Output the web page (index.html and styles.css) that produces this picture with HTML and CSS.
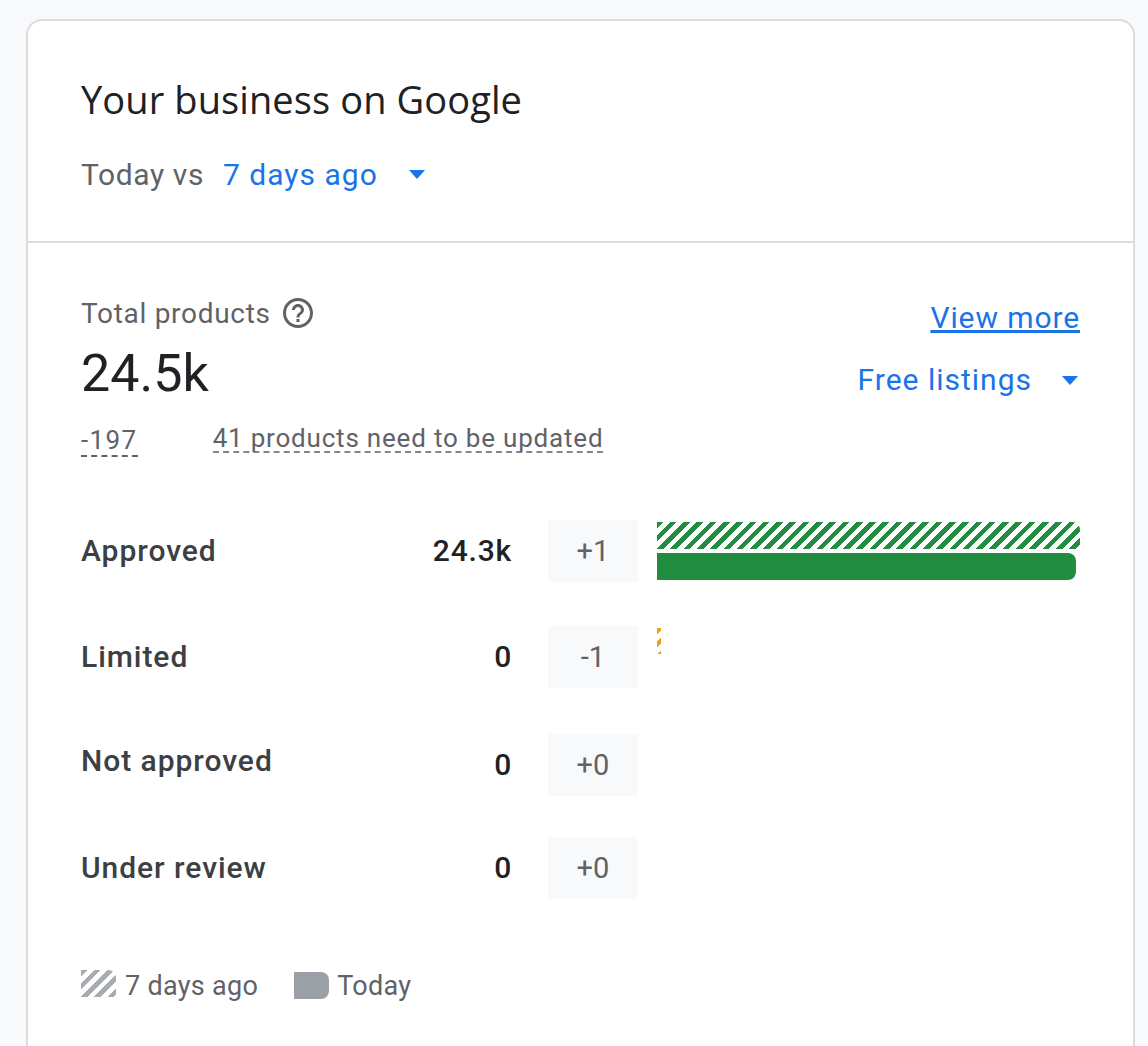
FILE: index.html
```html
<!DOCTYPE html>
<html lang="en">
<head>
<meta charset="utf-8">
<title>Your business on Google</title>
<link rel="stylesheet" href="styles.css">
</head>
<body>
<main class="card">
  <header class="head">
    <h1 class="title">Your business on Google</h1>
    <div class="compare">
      <span class="compare-label">Today vs</span>
      <span class="compare-value">7 days ago</span>
      <span class="caret caret-head"></span>
    </div>
  </header>
  <section class="body">
    <div class="summary">
      <div class="summary-left">
        <div class="total-label">Total products
          <svg class="help" viewBox="0 0 24 24" aria-hidden="true"><path d="M11 18h2v-2h-2v2zm1-16C6.48 2 2 6.48 2 12s4.48 10 10 10 10-4.48 10-10S17.52 2 12 2zm0 18c-4.41 0-8-3.59-8-8s3.59-8 8-8 8 3.59 8 8-3.59 8-8 8zm0-14c-2.21 0-4 1.79-4 4h2c0-1.1.9-2 2-2s2 .9 2 2c0 2-3 1.75-3 5h2c0-2.25 3-2.5 3-5 0-2.21-1.79-4-4-4z"/></svg>
        </div>
        <div class="total-value">24.5k</div>
        <div class="notes">
          <span class="note note-delta">-197</span>
          <span class="note note-update">41 products need to be updated</span>
        </div>
      </div>
      <div class="summary-right">
        <a class="view-more" href="#">View more</a>
        <div class="listing"><span>Free listings</span><span class="caret caret-listing"></span></div>
      </div>
    </div>
    <div class="rows">
      <div class="row row-1">
        <span class="row-label">Approved</span><span class="row-value">24.3k</span><span class="chip">+1</span>
        <div class="bars"><div class="bar-old"></div><div class="bar-new"></div></div>
      </div>
      <div class="row row-2">
        <span class="row-label">Limited</span><span class="row-value">0</span><span class="chip">-1</span>
        <div class="bars"><div class="bar-limited"></div></div>
      </div>
      <div class="row row-3">
        <span class="row-label row-label-up">Not approved</span><span class="row-value">0</span><span class="chip">+0</span>
        <div class="bars"></div>
      </div>
      <div class="row row-4">
        <span class="row-label">Under review</span><span class="row-value">0</span><span class="chip">+0</span>
        <div class="bars"></div>
      </div>
    </div>
    <div class="legend">
      <span class="swatch swatch-old"></span><span class="legend-text legend-first">7 days ago</span>
      <span class="swatch swatch-new"></span><span class="legend-text legend-last">Today</span>
    </div>
  </section>
</main>
</body>
</html>
```
FILE: styles.css
```css
html, body { margin: 0; height: 100%; overflow: hidden; }
body { background: #f8f9fa; font-family: Roboto, "Liberation Sans", sans-serif; color: #3c4043; }
.card {
  box-sizing: border-box; width: 1109px; height: 1027px; margin: 19px 0 0 26px;
  background: #fff; border: 2px solid #dadce0; border-bottom: 0; border-radius: 16px 16px 0 0;
}
.head { box-sizing: border-box; height: 222px; padding: 54px 53px 0; border-bottom: 2px solid #dadce0; }
.title { margin: 0; font: 400 38px/48px "Open Sans", sans-serif; letter-spacing: 0.1px; color: #202124; }
.compare { display: flex; align-items: center; height: 40px; margin-top: 31px; font-size: 30px; }
.compare-label { color: #5f6368; margin-right: 19px; letter-spacing: 0.6px; }
.compare-value { color: #1a73e8; letter-spacing: 1px; }
.caret { width: 0; height: 0; border-left: 8.5px solid transparent; border-right: 8.5px solid transparent; border-top: 9px solid #1a73e8; }
.caret-head { margin-left: 31px; }
.caret-listing { margin: 0 2px 0 30px; }
.body { padding: 50px 53px 0; }
.summary { display: flex; justify-content: space-between; }
.total-label { display: flex; align-items: center; gap: 9px; height: 40px; font-size: 28px; letter-spacing: 0.7px; color: #5f6368; }
.help { width: 36px; height: 36px; fill: #5f6368; }
.total-value { font-size: 52px; line-height: 64px; color: #202124; margin-top: 9px; }
.notes { display: flex; align-items: flex-start; gap: 75px; margin-top: 19px; }
.note { font-size: 26px; line-height: 30px; letter-spacing: 0.8px; color: #5f6368; border-bottom: 2px dashed #5f6368; }
.note-delta { letter-spacing: 1.4px; }
.note-update { line-height: 26px; border-bottom-color: #80868b; }
.summary-right { display: flex; flex-direction: column; align-items: flex-end; }
.view-more { font-size: 30px; line-height: 40px; letter-spacing: 0.9px; color: #1a73e8; text-decoration: underline; margin-top: 5px; }
.listing { display: flex; align-items: center; font-size: 30px; line-height: 40px; letter-spacing: 1px; color: #1a73e8; margin-top: 22px; }
.rows { margin-top: 63px; }
.row { display: flex; align-items: center; height: 62px; }
.row-2 { margin-top: 44px; }
.row-3 { margin-top: 46px; }
.row-4 { margin-top: 41px; }
.row-label { flex: 1; padding-bottom: 2px; font-size: 30px; font-weight: 500; letter-spacing: 0.95px; color: #3c4043; }
.row-label-up { position: relative; top: -4px; }
.row-value { padding-bottom: 2px; font-size: 30px; font-weight: 500; letter-spacing: 0.8px; color: #202124; }
.chip { display: flex; align-items: center; justify-content: center; width: 90px; height: 62px; margin-left: 36px; background: #f8f9fa; font-size: 29px; color: #5f6368; }
.bars { box-sizing: border-box; width: 423px; height: 62px; margin-left: 19px; padding-top: 2px; }
.bar-old { height: 27px; border-top-right-radius: 8px; background: repeating-linear-gradient(135deg, #228c40 0 4.7px, #fff 4.7px 9.4px); }
.bar-new { width: 419px; height: 27px; margin-top: 4px; border-radius: 0 8px 8px 0; background: #228c40; }
.bar-limited { width: 4px; height: 26px; background: repeating-linear-gradient(135deg, #e8a020 0 4.7px, #fff 4.7px 9.4px); }
.legend { display: flex; align-items: center; margin-top: 66px; height: 40px; }
.swatch { width: 35px; height: 27px; }
.swatch-old { margin-bottom: 3px; background: repeating-linear-gradient(135deg, #a8abb0 0 4.7px, #fff 4.7px 9.4px); border-top-right-radius: 8px; }
.swatch-new { margin-top: 1px; background: #9aa0a6; border-radius: 0 8px 8px 0; }
.legend-text { padding-top: 2px; font-size: 27px; letter-spacing: 0.3px; color: #5f6368; margin-left: 9px; }
.legend-first { margin-right: 36px; }
.legend-last { margin-left: 8px; }
```
